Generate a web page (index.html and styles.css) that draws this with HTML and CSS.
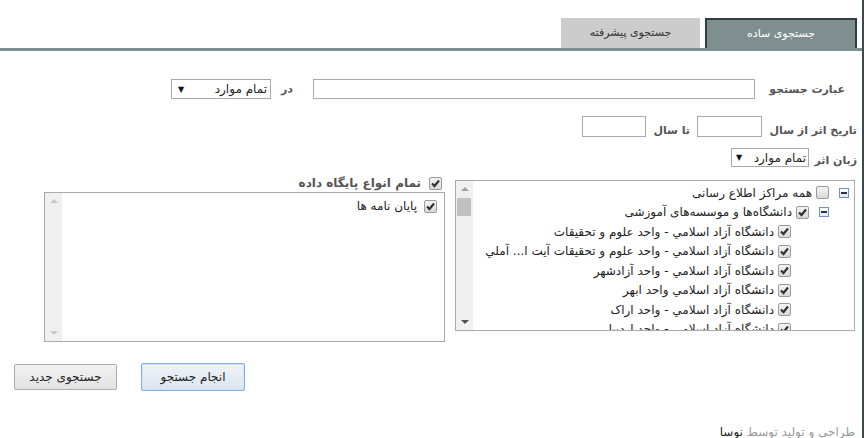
FILE: index.html
```html
<!DOCTYPE html>
<html lang="fa" dir="rtl">
<head>
    <meta charset="UTF-8">
    <meta name="viewport" content="width=device-width, initial-scale=1.0">
    <title>جستجو</title>
    <link rel="stylesheet" href="styles.css">
</head>
<body>
<div class="page">
    <div class="tabs">
        <div class="tab tab--active">جستجوی ساده</div>
        <div class="tab">جستجوی پیشرفته</div>
    </div>

    <div class="row row--phrase">
        <label class="caption caption--phrase">عبارت جستجو</label>
        <input type="text" class="field field--phrase">
        <span class="caption caption--in">در</span>
        <div class="select select--wide"><span>تمام موارد</span><span class="select__arrow">▼</span></div>
    </div>

    <div class="row row--date">
        <label class="caption caption--date">تاریخ اثر از سال</label>
        <input type="text" class="field field--year">
        <span class="caption caption--to">تا سال</span>
        <input type="text" class="field field--year2">
    </div>

    <div class="row row--lang">
        <label class="caption caption--lang">زبان اثر</label>
        <div class="select select--lang"><span>تمام موارد</span><span class="select__arrow">▼</span></div>
    </div>

    <div class="panels">
        <div class="tree-box">
            <ul class="tree">
                <li class="tree__item lvl-1"><span class="minus"></span><span class="cb"></span>همه مراکز اطلاع رسانی</li>
                <li class="tree__item lvl-2"><span class="minus"></span><span class="cb cb--on"><svg viewBox="0 0 11 11"><path d="M2 5.5 L4.5 8 L9 2.5"/></svg></span>دانشگاه‌ها و موسسه‌های آموزشی</li>
                <li class="tree__item lvl-3"><span class="cb cb--on"><svg viewBox="0 0 11 11"><path d="M2 5.5 L4.5 8 L9 2.5"/></svg></span>دانشگاه آزاد اسلامي - واحد علوم و تحقيقات</li>
                <li class="tree__item lvl-3"><span class="cb cb--on"><svg viewBox="0 0 11 11"><path d="M2 5.5 L4.5 8 L9 2.5"/></svg></span>دانشگاه آزاد اسلامي - واحد علوم و تحقيقات آيت ا... آملي</li>
                <li class="tree__item lvl-3"><span class="cb cb--on"><svg viewBox="0 0 11 11"><path d="M2 5.5 L4.5 8 L9 2.5"/></svg></span>دانشگاه آزاد اسلامي - واحد آزادشهر</li>
                <li class="tree__item lvl-3"><span class="cb cb--on"><svg viewBox="0 0 11 11"><path d="M2 5.5 L4.5 8 L9 2.5"/></svg></span>دانشگاه آزاد اسلامي واحد ابهر</li>
                <li class="tree__item lvl-3"><span class="cb cb--on"><svg viewBox="0 0 11 11"><path d="M2 5.5 L4.5 8 L9 2.5"/></svg></span>دانشگاه آزاد اسلامي - واحد اراک</li>
                <li class="tree__item lvl-3"><span class="cb cb--on"><svg viewBox="0 0 11 11"><path d="M2 5.5 L4.5 8 L9 2.5"/></svg></span>دانشگاه آزاد اسلامي - واحد اردبيل</li>
            </ul>
            <div class="scrollbar">
                <span class="scrollbar__up"></span>
                <span class="scrollbar__thumb"></span>
                <span class="scrollbar__down"></span>
            </div>
        </div>

        <div class="db">
            <div class="db__head"><span class="cb cb--on"><svg viewBox="0 0 11 11"><path d="M2 5.5 L4.5 8 L9 2.5"/></svg></span>تمام انواع پایگاه داده</div>
            <div class="db__box">
                <ul class="db__list">
                    <li class="db__item"><span class="cb cb--on"><svg viewBox="0 0 11 11"><path d="M2 5.5 L4.5 8 L9 2.5"/></svg></span>پایان نامه ها</li>
                </ul>
                <div class="scrollbar scrollbar--off">
                    <span class="scrollbar__up"></span>
                    <span class="scrollbar__down"></span>
                </div>
            </div>
        </div>
    </div>

    <div class="actions">
        <button class="btn btn--primary">انجام جستجو</button>
        <button class="btn">جستجوی جدید</button>
    </div>

    <div class="footer">طراحی و تولید توسط <a class="footer__link">نوسا</a></div>
</div>
</body>
</html>
```

FILE: styles.css
```css
* {
    box-sizing: border-box;
}

html, body {
    margin: 0;
    padding: 0;
}

body {
    background-color: #fff;
    font-family: "DejaVu Sans", Tahoma, sans-serif;
    font-size: 11px;
    color: #333;
}

.page {
    width: 864px;
    height: 438px;
    overflow: hidden;
    border-right: 2px solid #3b4a4e;
}

/* tabs */
.tabs {
    display: flex;
    gap: 5px;
    padding: 18px 5px 0 0;
    border-bottom: 3px solid #7f8f8f;
}

.tab {
    width: 139px;
    height: 30px;
    line-height: 29px;
    text-align: center;
    background-color: #ccc;
    color: #333;
}

.tab--active {
    width: 152px;
    line-height: 27px;
    background-color: #7f8f8f;
    color: #fff;
    border: 2px solid #2e3d42;
    border-bottom: 0;
}

/* rows */
.row {
    display: flex;
    align-items: center;
}

.caption {
    font-weight: bold;
    color: #555;
}

.field {
    height: 20px;
    padding: 0 3px;
    border: 1px solid #aaa;
    font: inherit;
}

.select {
    display: flex;
    justify-content: space-between;
    align-items: center;
    height: 20px;
    padding: 0 3px 0 6px;
    border: 1px solid #a9a9a9;
    background-color: #fff;
    color: #222;
    font-size: 12px;
}

.select__arrow {
    font-size: 8px;
    color: #111;
}

.row--phrase {
    margin-top: 28px;
    padding-right: 17px;
}

.caption--phrase {
    width: 90px;
}

.field--phrase {
    width: 442px;
}

.caption--in {
    margin: 0 20px 0 10px;
}

.select--wide {
    width: 100px;
}

.row--date {
    margin-top: 16px;
    padding-right: 5px;
}

.caption--date {
    width: 95px;
    padding-top: 9px;
}

.field--year {
    width: 65px;
    height: 21px;
}

.caption--to {
    width: 51px;
    padding: 9px 7px 0 0;
}

.field--year2 {
    width: 64px;
    height: 21px;
}

.row--lang {
    margin-top: 11px;
    padding-right: 5px;
}

.caption--lang {
    width: 48px;
    padding-top: 6px;
}

.select--lang {
    width: 78px;
    height: 19px;
    padding: 0 2px 0 4px;
}

/* panels */
.panels {
    display: flex;
    align-items: flex-start;
    gap: 10px;
    margin-top: 7px;
    padding-right: 7px;
}

.tree-box {
    display: flex;
    width: 400px;
    height: 151px;
    margin-top: 6px;
    border: 1px solid #aaa;
    overflow: hidden;
}

.tree,
.db__list {
    flex: 1;
    margin: 0;
    padding: 2px 0 0;
    list-style: none;
    overflow: hidden;
}

.tree__item {
    display: flex;
    align-items: center;
    height: 19.5px;
    white-space: nowrap;
    font-size: 12px;
    color: #222;
}

.lvl-1 {
    padding-right: 5px;
}

.lvl-2 {
    padding-right: 25px;
}

.lvl-3 {
    padding-right: 63px;
}

.minus {
    position: relative;
    width: 10px;
    height: 10px;
    margin-left: 10px;
    border: 1px solid #6f93c4;
    background: linear-gradient(#fff, #dfe6ef);
}

.minus::after {
    content: "";
    position: absolute;
    top: 3px;
    left: 1px;
    width: 6px;
    height: 2px;
    background-color: #333;
}

.cb {
    display: inline-flex;
    flex: none;
    width: 13px;
    height: 13px;
    margin-left: 4px;
    border: 1px solid #9a9a9a;
    border-radius: 2px;
    background: linear-gradient(#f4f4f4, #d9d9d9);
}

.cb svg {
    width: 11px;
    height: 11px;
}

.cb path {
    fill: none;
    stroke: #333;
    stroke-width: 2.2;
}

/* fake scrollbars */
.scrollbar {
    position: relative;
    flex: none;
    width: 17px;
    background-color: #f0f0f0;
}

.scrollbar__up,
.scrollbar__down {
    position: absolute;
    left: 5px;
    width: 0;
    height: 0;
    border-left: 4px solid transparent;
    border-right: 4px solid transparent;
}

.scrollbar__up {
    top: 6px;
    border-bottom: 4px solid #a3a3a3;
}

.scrollbar__down {
    bottom: 6px;
    border-top: 4px solid #505050;
}

.scrollbar__thumb {
    position: absolute;
    top: 17px;
    left: 1px;
    width: 14px;
    height: 18px;
    background-color: #c1c1c1;
}

.scrollbar--off .scrollbar__up {
    border-bottom-color: #c8c8c8;
}

.scrollbar--off .scrollbar__down {
    border-top-color: #c8c8c8;
}

.db {
    width: 401px;
}

.db__head {
    display: flex;
    align-items: center;
    height: 18px;
    padding-right: 3px;
    font-weight: bold;
    color: #555;
    font-size: 12px;
}

.db__head .cb {
    margin-left: 8px;
}

.db__box {
    display: flex;
    height: 150px;
    border: 1px solid #aaa;
}

.db__list {
    padding-top: 6px;
}

.db__item {
    display: flex;
    align-items: center;
    padding-right: 7px;
    font-size: 12px;
    color: #222;
}

.db__item .cb {
    margin-left: 7px;
}

/* buttons */
.actions {
    display: flex;
    justify-content: flex-end;
    align-items: center;
    gap: 24px;
    margin-top: 21px;
    padding-left: 14px;
    height: 28px;
}

.btn {
    width: 103px;
    height: 26px;
    padding: 0;
    border: 1px solid #acacac;
    border-radius: 2px;
    background: linear-gradient(#f2f2f2, #e2e2e2);
    font: inherit;
    font-size: 12px;
    color: #222;
}

.btn--primary {
    width: 104px;
    height: 28px;
    border: 1px solid #7eaee6;
    box-shadow: inset 0 0 0 1px #cfe4fa;
    background: linear-gradient(#eef3f8, #dde4ec);
}

.footer {
    margin-top: 33px;
    padding-right: 7px;
    line-height: 16px;
    font-size: 12px;
    color: #999;
}

.footer__link {
    color: #222;
}
```
